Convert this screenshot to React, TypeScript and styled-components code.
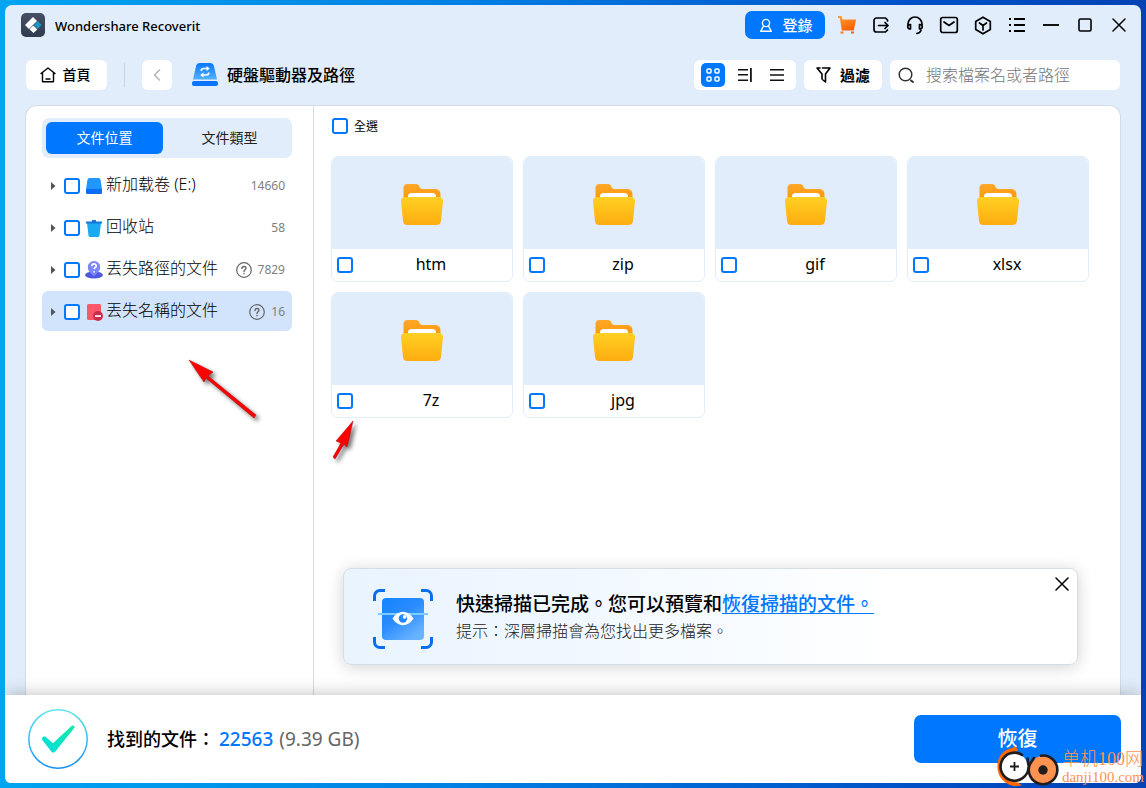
import React from "react";
import styled, { createGlobalStyle, css } from "styled-components";

const BLUE = "#0077ff";
const PALE = "#e1edfb";

const GlobalStyle = createGlobalStyle`
  *, *::before, *::after { box-sizing: border-box; }
  body {
    margin: 0;
    font-family: "Noto Sans", "Noto Sans CJK TC", sans-serif;
    font-size: 16px;
    color: #000;
  }
  button { font: inherit; border: 0; padding: 0; margin: 0; background: none; color: inherit; }
  svg { display: block; flex: none; }
  ul { list-style: none; margin: 0; padding: 0; }
`;

const Desktop = styled.div`
  position: relative;
  display: flex;
  min-height: 100vh;
  padding: 5px;
  overflow: hidden;
  background: linear-gradient(90deg, #00a5f1 0%, #0080e4 40%, #0050c8 80%, #0443b4 100%);
`;

const AppWindow = styled.div`
  display: flex;
  flex-direction: column;
  flex: 1;
  min-width: 0;
  border-radius: 7px 7px 6px 6px;
  overflow: hidden;
  background: ${PALE};
`;

const TitleBar = styled.header`
  display: flex;
  align-items: center;
  height: 40px;
  padding: 0 5px 0 16px;
`;

const AppName = styled.h1`
  margin: 0 auto 0 10px;
  padding-top: 2px;
  font-size: 13px;
  font-weight: 500;
  line-height: 20px;
  white-space: nowrap;
`;

const LoginButton = styled.button`
  display: flex;
  align-items: center;
  justify-content: center;
  gap: 9px;
  width: 80px;
  height: 28px;
  margin-right: 5px;
  padding-left: 2px;
  border-radius: 7px;
  background: ${BLUE};
  color: #fff;
  font-size: 15px;
  font-weight: 500;
  line-height: 20px;
`;

const TitleIconButton = styled.button`
  display: grid;
  place-items: center;
  width: 34px;
  height: 30px;
`;

const Toolbar = styled.div`
  display: flex;
  align-items: center;
  height: 60px;
  padding: 0 21px;
`;

const panelButton = css`
  display: flex;
  align-items: center;
  justify-content: center;
  height: 30px;
  border-radius: 6px;
  background: #fff;
`;

const ToolButton = styled.button<{ $width: number; $bold?: boolean }>`
  ${panelButton}
  gap: ${(p) => (p.$bold ? 9 : 7)}px;
  width: ${(p) => p.$width}px;
  padding-right: ${(p) => (p.$width > 80 ? 3 : 0)}px;
  font-size: ${(p) => (p.$bold ? 15 : 14)}px;
  font-weight: ${(p) => (p.$bold ? 700 : 500)};
  line-height: 20px;
`;

const ToolDivider = styled.span`
  width: 1px;
  height: 24px;
  margin: 0 17px;
  background: #c5d3e4;
`;

const Location = styled.div`
  display: flex;
  align-items: center;
  gap: 9px;
  margin: 0 auto 0 20px;
`;

const LocationName = styled.h2`
  margin: 0;
  font-size: 16px;
  font-weight: 500;
  line-height: 24px;
  white-space: nowrap;
`;

const ToolGroup = styled.div`
  display: flex;
  gap: 8px;
`;

const ViewSwitch = styled.div`
  ${panelButton}
  gap: 8px;
  width: 102px;
`;

const ViewButton = styled.button<{ $active?: boolean }>`
  display: grid;
  place-items: center;
  width: 24px;
  height: 24px;
  border-radius: 5px;
  background: ${(p) => (p.$active ? BLUE : "transparent")};
  color: ${(p) => (p.$active ? "#fff" : "#111")};
`;

const SearchBox = styled.label`
  ${panelButton}
  justify-content: flex-start;
  gap: 11px;
  width: 230px;
  padding: 0 8px;
`;

const SearchInput = styled.input`
  flex: 1;
  min-width: 0;
  padding: 0;
  border: 0;
  outline: 0;
  background: none;
  font: 300 16px/24px "Noto Sans", "Noto Sans CJK TC", sans-serif;
  &::placeholder { color: #777; opacity: 1; }
`;

const Workspace = styled.main`
  display: flex;
  flex: 1;
  margin: 0 20px;
  border: 1px solid #d3dce6;
  border-bottom: 0;
  border-radius: 12px 12px 0 0;
  background: #fff;
`;

const Sidebar = styled.aside`
  width: 288px;
  padding: 12px 21px 0 16px;
  border-right: 1px solid #d9dce0;
`;

const Tabs = styled.div`
  display: flex;
  gap: 8px;
  height: 40px;
  padding: 4px;
  border-radius: 7px;
  background: ${PALE};
`;

const Tab = styled.button<{ $active?: boolean }>`
  flex: ${(p) => (p.$active ? "0 0 117px" : "1")};
  display: flex;
  align-items: center;
  justify-content: center;
  border-radius: 6px;
  font-size: 14px;
  line-height: 20px;
  background: ${(p) => (p.$active ? BLUE : "transparent")};
  color: ${(p) => (p.$active ? "#fff" : "#222")};
`;

const Tree = styled.ul`
  display: flex;
  flex-direction: column;
  gap: 2px;
  padding-top: 7px;
`;

const TreeRow = styled.li<{ $selected?: boolean }>`
  display: flex;
  align-items: center;
  height: 40px;
  padding: 2px 7px 0 9px;
  border-radius: 6px;
  background: ${(p) => (p.$selected ? "#d2e3fc" : "transparent")};
`;

const ExpandButton = styled.button`
  width: 13px;
  height: 16px;
  display: flex;
  align-items: center;
`;

const Checkbox = styled.input.attrs({ type: "checkbox" })`
  appearance: none;
  flex: none;
  width: 16px;
  height: 16px;
  margin: 0;
  border: 2px solid ${BLUE};
  border-radius: 3px;
  background: #fff;
  &:checked { background: ${BLUE}; }
`;

const TreeLabel = styled.label`
  display: flex;
  align-items: center;
  gap: 3px;
  margin: 0 auto 0 5px;
  line-height: 24px;
  white-space: nowrap;
`;

const TreeText = styled.span`
  padding-bottom: 4px;
  font-weight: 300;
`;

const TreeCount = styled.span`
  margin-left: 6px;
  font-size: 12px;
  line-height: 16px;
  color: #808080;
`;

const Content = styled.section`
  display: flex;
  flex-direction: column;
  flex: 1;
  min-width: 0;
`;

const SelectAll = styled.label`
  display: flex;
  align-items: center;
  align-self: flex-start;
  gap: 6px;
  padding: 11px 18px 21px;
  font-size: 12px;
  line-height: 18px;
`;

const SelectAllText = styled.span`
  padding-top: 2px;
  line-height: 16px;
`;

const Cards = styled.ul`
  display: grid;
  grid-template-columns: repeat(auto-fill, 182px);
  gap: 10px;
  padding: 0 17px;
`;

const Card = styled.li`
  height: 126px;
  border: 1px solid ${PALE};
  border-radius: 7px;
  overflow: hidden;
`;

const Thumb = styled.div`
  display: grid;
  place-items: center;
  height: 92px;
  padding-top: 4px;
  background: ${PALE};
`;

const CardLabel = styled.label`
  display: flex;
  align-items: center;
  height: 32px;
  padding: 0 3px 0 5px;
`;

const CardName = styled.span`
  flex: 1;
  text-align: center;
  line-height: 24px;
  padding-bottom: 2px;
`;

const Notice = styled.section`
  display: flex;
  align-items: center;
  gap: 23px;
  min-height: 97px;
  margin: auto 42px 30px 29px;
  padding: 4px 8px 0 29px;
  border: 1px solid #d6dde4;
  border-radius: 8px;
  background: linear-gradient(90deg, #eaf4ff 0%, #f0f8ff 30%, #fff 75%);
  box-shadow: 0 2px 16px rgba(0, 0, 0, 0.18);
`;

const NoticeBody = styled.div`
  padding-bottom: 3px;
`;

const NoticeTitle = styled.h3`
  margin: 0;
  font-size: 19px;
  font-weight: 500;
  line-height: 28px;
  white-space: nowrap;
`;

const NoticeLink = styled.a`
  color: ${BLUE};
  text-decoration: underline;
  text-underline-offset: 2px;
  text-decoration-thickness: 1px;
`;

const NoticeHint = styled.p`
  margin: 0;
  font-weight: 300;
  line-height: 26px;
  color: #222;
  white-space: nowrap;
`;

const NoticeClose = styled.button`
  align-self: flex-start;
  margin: 4px 0 0 auto;
`;

const Footer = styled.footer`
  position: relative;
  display: flex;
  align-items: center;
  gap: 19px;
  height: 88px;
  padding: 0 20px 0 23px;
  background: #fff;
  box-shadow: 0 -1px 16px rgba(0, 0, 0, 0.24);
`;

const Found = styled.p`
  margin: 0 auto 0 0;
  font-size: 18px;
  font-weight: 500;
  line-height: 28px;
  white-space: nowrap;
`;

const FoundFigures = styled.span<{ $blue?: boolean }>`
  font-size: 19px;
  margin-left: ${(p) => (p.$blue ? 4 : 1)}px;
  font-weight: ${(p) => (p.$blue ? 500 : 400)};
  color: ${(p) => (p.$blue ? BLUE : "#666")};
`;

const RecoverButton = styled.button`
  width: 207px;
  height: 48px;
  border-radius: 7px;
  background: ${BLUE};
  color: #fff;
  font-size: 20px;
  font-weight: 500;
  line-height: 28px;
`;

const Annotation = styled.svg<{ $left: number; $top: number }>`
  position: absolute;
  left: ${(p) => p.$left}px;
  top: ${(p) => p.$top}px;
  overflow: visible;
  pointer-events: none;
  filter: drop-shadow(3px 3px 2px rgba(0, 0, 0, 0.55));
`;

const Watermark = styled.div`
  position: absolute;
  right: 2px;
  bottom: 0;
  display: flex;
  align-items: center;
  gap: 2px;
  pointer-events: none;
`;

const WatermarkText = styled.div`
  display: flex;
  flex-direction: column;
  padding-top: 2px;
  color: #ff9254;
  font-family: "Liberation Serif", "Noto Sans CJK SC", serif;
  white-space: nowrap;
`;

const WatermarkLine = styled.span<{ $size: number }>`
  font-size: ${(p) => p.$size}px;
  line-height: 18px;
  font-weight: 300;
`;

const line = { fill: "none", stroke: "currentColor", strokeLinecap: "round", strokeLinejoin: "round" } as const;

const AppLogo = () => (
  <svg width="24" height="24" viewBox="0 0 24 24">
    <defs>
      <linearGradient id="logo-bg" x2="0" y2="1">
        <stop stopColor="#475064" />
        <stop offset="1" stopColor="#303a50" />
      </linearGradient>
    </defs>
    <rect width="24" height="24" rx="5" fill="url(#logo-bg)" />
    <path d="M4 12 12 4l4 4-8 8z" fill="#fff" />
    <path d="M8.500 16.200 12.300 12.400l4 4L12.400 20z" fill="#fff" />
    <path d="m12.800 12 4-4 3.700 4-3.700 4z" fill="#1798c6" />
  </svg>
);

const UserIcon = () => (
  <svg width="14" height="15" viewBox="0 0 14 15" {...line} strokeWidth="1.400">
    <circle cx="7" cy="5" r="3.600" />
    <path d="M4.500 8 1.700 13.300h10.600L9.500 8" />
  </svg>
);

const CartIcon = () => (
  <svg width="20" height="20" viewBox="0 0 20 20">
    <defs>
      <linearGradient id="cart" x1="0" y1="0" x2=".4" y2="1">
        <stop stopColor="#ffa23c" />
        <stop offset="1" stopColor="#ff6200" />
      </linearGradient>
    </defs>
    <path d="M1 1h3.500l1 3.500H19L16.800 15.500H4.800L2.800 3H1z" fill="url(#cart)" />
    <rect x="3.500" y="16.500" width="3" height="2" fill="#ff7a16" />
    <rect x="14" y="16.500" width="3" height="2" fill="#ff6200" />
  </svg>
);

const ExportIcon = () => (
  <svg width="18" height="18" viewBox="0 0 18 18" {...line} strokeWidth="1.700">
    <path d="M15.500 5V4L13.500 2h-9A2.500 2.500 0 0 0 2 4.500v9A2.500 2.500 0 0 0 4.500 16h9l2-2M6.500 9.500h9.500M13 6.500l3 3-3 3" />
  </svg>
);

const HeadsetIcon = () => (
  <svg width="18" height="19" viewBox="0 0 18 19" {...line} strokeWidth="1.700">
    <path d="M2 9V8a7 7 0 0 1 14 0v1" />
    <path d="M4.500 8.500V13C.8 13.300.8 8.200 4.500 8.500zM13.500 8.500V13c3.700.3 3.700-4.800 0-4.500zM15 14.500c-.8 1.700-2.300 2.800-4.300 3" />
  </svg>
);

const MailIcon = () => (
  <svg width="20" height="18" viewBox="0 0 20 18" {...line} strokeWidth="1.700">
    <rect x="1.700" y="1.500" width="16.600" height="15" rx="2" />
    <path d="m5 6 5 3.500L15 6" />
  </svg>
);

const CubeIcon = () => (
  <svg width="18" height="19" viewBox="0 0 18 19" {...line} strokeWidth="1.700">
    <path d="m9 1.200 7.300 4.200v8.200L9 17.800l-7.300-4.200V5.400zM5.500 7 9 9.500 12.500 7M9 9.500V14" />
  </svg>
);

const ListIcon = () => (
  <svg width="18" height="16" viewBox="0 0 18 16" {...line} strokeWidth="2" strokeLinecap="butt">
    <path d="M6 2h11M6 8h11M6 14h11M1 2h2M1 8h2M1 14h2" />
  </svg>
);

const MinimizeIcon = () => (
  <svg width="16" height="2" viewBox="0 0 16 2">
    <rect width="16" height="2" fill="#111" />
  </svg>
);

const MaximizeIcon = () => (
  <svg width="14" height="14" viewBox="0 0 14 14" {...line} strokeWidth="1.600">
    <rect x="1" y="1" width="12" height="12" rx="1.500" />
  </svg>
);

const CloseIcon = () => (
  <svg width="14" height="14" viewBox="0 0 14 14" {...line} strokeWidth="1.500">
    <path d="m1 1 12 12M13 1 1 13" />
  </svg>
);

const HomeIcon = () => (
  <svg width="16" height="16" viewBox="0 0 16 16" {...line} strokeWidth="1.400">
    <path d="M1 6.500 8 1l7 5.500M2.500 5.800v9h11v-9M6 12h4" />
  </svg>
);

const BackIcon = () => (
  <svg width="8" height="12" viewBox="0 0 8 12" {...line} stroke="#b5b5b5" strokeWidth="1.600">
    <path d="M6.500 1 1.500 6l5 5" />
  </svg>
);

const DriveIcon = () => (
  <svg width="26" height="24" viewBox="0 0 26 24">
    <defs>
      <linearGradient id="drive" x2="0" y2="1">
        <stop stopColor="#0a76ff" />
        <stop offset="1" stopColor="#52b4ff" />
      </linearGradient>
    </defs>
    <path d="M7.500 0h11a3.500 3.500 0 0 1 3.300 2.500L25 16.500H1L4.200 2.500A3.500 3.500 0 0 1 7.500 0z" fill="url(#drive)" />
    <rect y="18" width="26" height="5" rx="2" fill="#0a74ff" />
    <path d="M9.200 8c0-1.800 1-2.500 2.500-2.500h4M16.800 9.500c0 1.800-1 2.500-2.500 2.500h-4" fill="none" stroke="#fff" strokeWidth="1.600" />
    <path d="m14.500 3 3.300 2.500L14.500 8zM11.500 9.500 8.200 12l3.300 2.500z" fill="#fff" />
  </svg>
);

const GridIcon = () => (
  <svg width="14" height="14" viewBox="0 0 14 14" {...line} strokeWidth="1.500">
    <rect x="1" y="1" width="4" height="4" rx="1" />
    <rect x="9" y="1" width="4" height="4" rx="1" />
    <rect x="1" y="9" width="4" height="4" rx="1" />
    <rect x="9" y="9" width="4" height="4" rx="1" />
  </svg>
);

const DetailIcon = () => (
  <svg width="14" height="14" viewBox="0 0 14 14" fill="#111">
    <path d="M0 1h10v1.500H0zM0 6h10v1.500H0zM0 11.500h10V13H0zM12 0h1.800v14H12z" />
  </svg>
);

const LinesIcon = () => (
  <svg width="14" height="14" viewBox="0 0 14 14" fill="#111">
    <path d="M0 1h14v1.500H0zM0 6.200h14v1.500H0zM0 11.500h14V13H0z" />
  </svg>
);

const FilterIcon = () => (
  <svg width="15" height="16" viewBox="0 0 15 16" {...line} strokeWidth="1.600">
    <path d="M4 1H1l5 6v5M6.500 1H14L9.500 7v8L7 13" />
  </svg>
);

const SearchIcon = () => (
  <svg width="17" height="17" viewBox="0 0 17 17" {...line} stroke="#333" strokeWidth="1.500">
    <circle cx="7.500" cy="7.500" r="6.300" />
    <path d="m13 13.500 2 1.500" strokeWidth="2" />
  </svg>
);

const ArrowIcon = () => (
  <svg width="5" height="8" viewBox="0 0 5 8">
    <path d="M0 0 4.500 4 0 8z" fill="#555" />
  </svg>
);

const HelpIcon = () => (
  <svg width="16" height="16" viewBox="0 0 16 16" {...line} stroke="#666" strokeWidth="1.200">
    <circle cx="8" cy="8" r="7.300" />
    <path d="M6 6.500C6 3.800 10 3.800 10 6.300 10 7.800 8 7.800 8 9.500M8 11.500v.3" strokeWidth="1.400" />
  </svg>
);

const VolumeIcon = () => (
  <svg width="18" height="18" viewBox="0 0 18 18">
    <path d="M4.500 1h9a2 2 0 0 1 2 1.500L17 12H1l1.500-9.500A2 2 0 0 1 4.500 1z" fill="#2196ff" />
    <path d="M1 12h16v3.500a1.500 1.500 0 0 1-1.500 1.500h-13A1.500 1.500 0 0 1 1 15.500z" fill="#0b6cf5" />
  </svg>
);

const BinIcon = () => (
  <svg width="18" height="18" viewBox="0 0 18 18">
    <path d="M2 4h14l-1.500 12.500a1.500 1.500 0 0 1-1.500 1.500H5a1.500 1.500 0 0 1-1.500-1.500z" fill="#1ba9ef" />
    <path d="M1 2.500h6V1h4v1.500h6v2H1z" fill="#1378dc" />
  </svg>
);

const LostPathIcon = () => (
  <svg width="18" height="18" viewBox="0 0 18 18">
    <ellipse cx="9" cy="14" rx="9" ry="3.500" fill="#5058e0" />
    <path d="M9 0a6.200 6.200 0 0 1 6.200 6.200c0 4-3.200 5.800-6.200 9.300-3-3.500-6.200-5.300-6.200-9.300A6.200 6.200 0 0 1 9 0z" fill="#7d86fb" />
    <path d="M6.800 5.200c0-3 4.400-3 4.400-.2C11.200 6.600 9 6.600 9 8.300M9 10.300v1.200" fill="none" stroke="#fff" strokeWidth="1.700" />
  </svg>
);

const LostNameIcon = () => (
  <svg width="18" height="18" viewBox="0 0 18 18">
    <path d="M3.500 1h11A1.500 1.500 0 0 1 16 2.500V17H3.500A1.500 1.500 0 0 1 2 15.500v-13A1.500 1.500 0 0 1 3.500 1z" fill="#f75968" />
    <circle cx="13" cy="13" r="5" fill="#cb2b4c" />
    <path d="M10 12.200h6v1.700h-6z" fill="#fff" />
  </svg>
);

const FolderIcon = () => (
  <svg width="42" height="42" viewBox="0 0 42 42">
    <defs>
      <linearGradient id="folder-front" x2="0" y2="1">
        <stop stopColor="#ffd023" />
        <stop offset="1" stopColor="#ffad10" />
      </linearGradient>
      <linearGradient id="folder-back" x2="0" y2="1">
        <stop stopColor="#ffa82a" />
        <stop offset="1" stopColor="#ff9500" />
      </linearGradient>
    </defs>
    <path d="M2.500 16V4A4 4 0 0 1 6.500 0H15c4 0 3 5 6.500 5H34.500A5 5 0 0 1 39.500 10v8h-37z" fill="url(#folder-back)" />
    <path d="M7 17v-4.500A3.500 3.500 0 0 1 10.500 9h21a3.500 3.500 0 0 1 3.500 3.500V17z" fill="#fff" />
    <path d="M4 13h34a4 4 0 0 1 4 4.300l-2 19.700a4.500 4.500 0 0 1-4.500 4h-29A4.500 4.500 0 0 1 2 37L0 17.300A4 4 0 0 1 4 13z" fill="url(#folder-front)" />
  </svg>
);

const ScanIcon = () => (
  <svg width="60" height="60" viewBox="0 0 60 60">
    <defs>
      <linearGradient id="scan" x2=".7" y2="1">
        <stop stopColor="#1484ff" />
        <stop offset=".5" stopColor="#2a8cff" />
        <stop offset="1" stopColor="#6ab4ff" />
      </linearGradient>
    </defs>
    <rect x="9" y="9" width="42" height="42" rx="4" fill="url(#scan)" />
    <path d="M1.500 12V7A5.500 5.500 0 0 1 7 1.500h5M48 1.500h5A5.500 5.500 0 0 1 58.500 7v5M58.500 48v5a5.500 5.500 0 0 1-5.500 5.500h-5M12 58.500H7A5.500 5.500 0 0 1 1.500 53v-5" fill="none" stroke="#0b6df0" strokeWidth="3" />
    <rect x="5" y="24" width="50" height="2" fill="#7ccdff" />
    <path d="M19.500 29.500C25 20.500 35 20.500 40.500 29.500 35 38.500 25 38.500 19.500 29.500z" fill="#fff" />
    <circle cx="30" cy="29.500" r="4.200" fill="#2288ff" />
    <circle cx="31.700" cy="27.800" r="1.900" fill="#fff" />
  </svg>
);

const DoneIcon = () => (
  <svg width="60" height="60" viewBox="0 0 60 60">
    <defs>
      <linearGradient id="ring" x2="0" y2="1">
        <stop stopColor="#5ee6ec" />
        <stop offset="1" stopColor="#1790f5" />
      </linearGradient>
      <linearGradient id="tick" x1="1" y1="0" x2="0" y2="1">
        <stop stopColor="#10e8a4" />
        <stop offset="1" stopColor="#00e0e0" />
      </linearGradient>
    </defs>
    <circle cx="30" cy="30" r="29.200" fill="#fff" stroke="url(#ring)" strokeWidth="1.500" />
    <path d="M14.300 31c-1-2.300 1.200-4.200 3.200-3.200l7.500 6.500L43.500 17c2-1.400 4.200 0 2.500 2.300L27.300 42.500c-1.200 1.500-3 1.500-4 0z" fill="url(#tick)" />
  </svg>
);

const WatermarkLogo = () => (
  <svg width="64" height="42" viewBox="0 0 64 42">
    <path d="M16 2C6 4 1 12 1.500 22c.5 9 7 16.500 16.500 18l8-.5-4-3C12 36 5 31 5 21 5 12 10 7 21 4z" fill="#ff6a00" />
    <path d="m11 6 8-6 3 4-4 3z" fill="#ff6a00" />
    <circle cx="18.500" cy="21" r="13.500" fill="#fff" />
    <path d="M26 8.800A14 14 0 1 0 32.500 22M31.500 12.500c1 12 5 20 14 22" fill="none" stroke="#231c1c" strokeWidth="2.600" strokeLinecap="round" />
    <path d="M14 20.500h9M18.500 16v9" stroke="#231c1c" strokeWidth="1.800" />
    <circle cx="47" cy="24" r="14" fill="#ff924f" />
    <path d="M45 9.700A14.300 14.300 0 1 1 34 18l4-6" fill="none" stroke="#231c1c" strokeWidth="2.600" strokeLinecap="round" />
    <circle cx="47" cy="24" r="4.700" fill="#231c1c" />
  </svg>
);

const titleActions: [string, React.FC][] = [
  ["購買", CartIcon],
  ["匯出", ExportIcon],
  ["支援", HeadsetIcon],
  ["郵件", MailIcon],
  ["產品", CubeIcon],
  ["選單", ListIcon],
  ["最小化", MinimizeIcon],
  ["最大化", MaximizeIcon],
  ["關閉", CloseIcon],
];

const treeItems = [
  { name: "新加载卷 (E:)", count: "14660", Icon: VolumeIcon },
  { name: "回收站", count: "58", Icon: BinIcon },
  { name: "丟失路徑的文件", count: "7829", Icon: LostPathIcon, help: true },
  { name: "丟失名稱的文件", count: "16", Icon: LostNameIcon, help: true, selected: true },
];

const folders = ["htm", "zip", "gif", "xlsx", "7z", "jpg"];

export default function App() {
  return (
    <Desktop>
      <GlobalStyle />
      <AppWindow>
        <TitleBar>
          <AppLogo />
          <AppName>Wondershare Recoverit</AppName>
          <LoginButton>
            <UserIcon />
            登錄
          </LoginButton>
          {titleActions.map(([label, Icon]) => (
            <TitleIconButton key={label} aria-label={label}>
              <Icon />
            </TitleIconButton>
          ))}
        </TitleBar>

        <Toolbar>
          <ToolButton $width={81}>
            <HomeIcon />
            首頁
          </ToolButton>
          <ToolDivider />
          <ToolButton $width={30} aria-label="返回">
            <BackIcon />
          </ToolButton>
          <Location>
            <DriveIcon />
            <LocationName>硬盤驅動器及路徑</LocationName>
          </Location>
          <ToolGroup>
            <ViewSwitch>
              <ViewButton $active aria-label="圖示">
                <GridIcon />
              </ViewButton>
              <ViewButton aria-label="詳細">
                <DetailIcon />
              </ViewButton>
              <ViewButton aria-label="列表">
                <LinesIcon />
              </ViewButton>
            </ViewSwitch>
            <ToolButton $width={78} $bold>
              <FilterIcon />
              過濾
            </ToolButton>
            <SearchBox>
              <SearchIcon />
              <SearchInput type="text" placeholder="搜索檔案名或者路徑" aria-label="搜索" />
            </SearchBox>
          </ToolGroup>
        </Toolbar>

        <Workspace>
          <Sidebar>
            <Tabs>
              <Tab $active>文件位置</Tab>
              <Tab>文件類型</Tab>
            </Tabs>
            <Tree>
              {treeItems.map(({ name, count, Icon, help, selected }, i) => (
                <TreeRow key={name} $selected={selected}>
                  <ExpandButton aria-label="展開">
                    <ArrowIcon />
                  </ExpandButton>
                  <Checkbox id={`tree-${i}`} />
                  <TreeLabel htmlFor={`tree-${i}`}>
                    <Icon />
                    <TreeText>{name}</TreeText>
                  </TreeLabel>
                  {help && <HelpIcon />}
                  <TreeCount>{count}</TreeCount>
                </TreeRow>
              ))}
            </Tree>
          </Sidebar>

          <Content>
            <SelectAll>
              <Checkbox />
              <SelectAllText>全選</SelectAllText>
            </SelectAll>
            <Cards>
              {folders.map((name) => (
                <Card key={name}>
                  <Thumb>
                    <FolderIcon />
                  </Thumb>
                  <CardLabel>
                    <Checkbox />
                    <CardName>{name}</CardName>
                  </CardLabel>
                </Card>
              ))}
            </Cards>
            <Notice>
              <ScanIcon />
              <NoticeBody>
                <NoticeTitle>
                  快速掃描已完成。您可以預覽和<NoticeLink href="#recover">恢復掃描的文件。</NoticeLink>
                </NoticeTitle>
                <NoticeHint>提示：深層掃描會為您找出更多檔案。</NoticeHint>
              </NoticeBody>
              <NoticeClose aria-label="關閉提示">
                <CloseIcon />
              </NoticeClose>
            </Notice>
          </Content>
        </Workspace>

        <Footer>
          <DoneIcon />
          <Found>
            找到的文件：<FoundFigures $blue>22563</FoundFigures>
            <FoundFigures> (9.39 GB)</FoundFigures>
          </Found>
          <RecoverButton>恢復</RecoverButton>
        </Footer>
      </AppWindow>

      <Annotation $left={189} $top={360} width="68" height="58" viewBox="0 0 68 58">
        <path d="M0 0 24 12 19 16 67 55 65 58 17 18 15 22z" fill="#f00" stroke="#a00" strokeWidth=".5" />
      </Annotation>
      <Annotation $left={333} $top={421} width="20" height="38" viewBox="0 0 20 38">
        <path d="M20 0 14 26 11 23 2 38 0 36 8 22 3 20z" fill="#f00" stroke="#a00" strokeWidth=".5" />
      </Annotation>

      <Watermark>
        <WatermarkLogo />
        <WatermarkText>
          <WatermarkLine $size={18}>单机100网</WatermarkLine>
          <WatermarkLine $size={15}>danji100.com</WatermarkLine>
        </WatermarkText>
      </Watermark>
    </Desktop>
  );
}
